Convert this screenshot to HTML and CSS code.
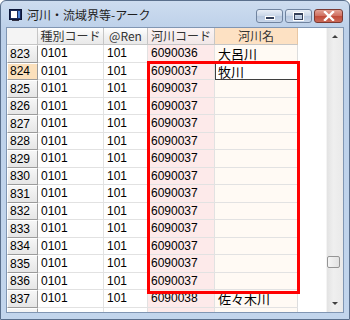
FILE: index.html
```html
<!DOCTYPE html>
<html lang="ja">
<head>
<meta charset="utf-8">
<link rel="stylesheet" href="styles.css">
</head>
<body>
<div class="window">
  <div class="titlebar">
    <svg class="appicon" width="13" height="12" viewBox="0 0 13 12">
      <rect x="0.5" y="0.5" width="12" height="10" fill="#1a2a5a" stroke="#0c1638"/>
      <rect x="2" y="2" width="6" height="7" fill="#ffffff"/>
      <rect x="9" y="2" width="2" height="7" fill="#4f86d9"/>
      <rect x="3" y="11" width="7" height="1" fill="#334"/>
    </svg>
    <span class="title">河川・流域界等-アーク</span>
    <div class="caption-btns">
      <div class="cbtn"><span class="min-glyph"></span></div>
      <div class="cbtn"><span class="max-glyph"></span></div>
      <div class="cbtn close">
        <svg width="12" height="10" viewBox="0 0 12 10"><path d="M2 1 L10 9 M10 1 L2 9" stroke="#ffffff" stroke-width="2.4" stroke-linecap="square"/></svg>
      </div>
    </div>
  </div>
  <div class="client">
    <div class="sheet">
      <div class="grid">
        <div class="hc corner"></div>
        <div class="hc">種別コード</div>
        <div class="hc">@Ren</div>
        <div class="hc code">河川コード</div>
        <div class="hc cur">河川名</div>

        <div class="rh">823</div><div class="c">0101</div><div class="c">101</div><div class="c code">6090036</div><div class="c name">大呂川</div>
        <div class="rh cur">824</div><div class="c">0101</div><div class="c">101</div><div class="c code">6090037</div><div class="c name edit">牧川</div>
        <div class="rh">825</div><div class="c">0101</div><div class="c">101</div><div class="c code">6090037</div><div class="c name"></div>
        <div class="rh">826</div><div class="c">0101</div><div class="c">101</div><div class="c code">6090037</div><div class="c name"></div>
        <div class="rh">827</div><div class="c">0101</div><div class="c">101</div><div class="c code">6090037</div><div class="c name"></div>
        <div class="rh">828</div><div class="c">0101</div><div class="c">101</div><div class="c code">6090037</div><div class="c name"></div>
        <div class="rh">829</div><div class="c">0101</div><div class="c">101</div><div class="c code">6090037</div><div class="c name"></div>
        <div class="rh">830</div><div class="c">0101</div><div class="c">101</div><div class="c code">6090037</div><div class="c name"></div>
        <div class="rh">831</div><div class="c">0101</div><div class="c">101</div><div class="c code">6090037</div><div class="c name"></div>
        <div class="rh">832</div><div class="c">0101</div><div class="c">101</div><div class="c code">6090037</div><div class="c name"></div>
        <div class="rh">833</div><div class="c">0101</div><div class="c">101</div><div class="c code">6090037</div><div class="c name"></div>
        <div class="rh">834</div><div class="c">0101</div><div class="c">101</div><div class="c code">6090037</div><div class="c name"></div>
        <div class="rh">835</div><div class="c">0101</div><div class="c">101</div><div class="c code">6090037</div><div class="c name"></div>
        <div class="rh">836</div><div class="c">0101</div><div class="c">101</div><div class="c code">6090037</div><div class="c name"></div>
        <div class="rh">837</div><div class="c">0101</div><div class="c">101</div><div class="c code">6090038</div><div class="c name">佐々木川</div>
        <div class="rh part"></div><div class="c part"></div><div class="c part"></div><div class="c code part"></div><div class="c name part"></div>
      </div>
      <div class="highlight"></div>
    </div>
    <div class="vscroll">
      <div class="arrow up"></div>
      <div class="track"><div class="thumb"></div></div>
      <div class="arrow down"></div>
    </div>
  </div>
</div>
</body>
</html>
```
FILE: styles.css
```css
html, body {
  margin: 0;
  padding: 0;
  background: #ffffff;
}
body {
  width: 350px;
  height: 320px;
  overflow: hidden;
  font-family: "Liberation Sans", "Noto Sans CJK JP", sans-serif;
}
.window {
  box-sizing: border-box;
  width: 350px;
  height: 320px;
  border: 1px solid #5a6f8c;
  border-radius: 6px 6px 0 0;
  background: linear-gradient(#cddcef, #bcd0e9 30px, #c2d5ec);
  display: flex;
  flex-direction: column;
  padding: 0 5px 6px 5px;
}
.titlebar {
  height: 26px;
  display: flex;
  align-items: center;
  flex: none;
}
.appicon {
  margin-left: 3px;
  margin-top: 1px;
}
.title {
  margin-left: 5px;
  font-family: "Noto Sans CJK JP", sans-serif;
  font-size: 12px;
  color: #1e1e1e;
  margin-top: 1px;
}
.caption-btns {
  margin-left: auto;
  display: flex;
  gap: 2px;
  align-self: flex-start;
  margin-top: 8px;
  margin-right: 1px;
}
.cbtn {
  width: 25px;
  height: 12px;
  border: 1px solid #6f839f;
  border-radius: 3px;
  background: linear-gradient(#e8eef7, #c9d6e8 50%, #b7c8df 51%, #c8d6ea);
  display: flex;
  align-items: center;
  justify-content: center;
}
.cbtn.close {
  width: 27px;
  border-color: #7a3a33;
  background: linear-gradient(#e3a194, #cf6e5f 50%, #c04a39 51%, #cb6a58);
}
.min-glyph {
  width: 8px;
  height: 2px;
  background: #34405a;
  margin-top: 4px;
  border: 1px solid #ffffff;
}
.max-glyph {
  width: 7px;
  height: 4px;
  border: 1px solid #34405a;
  border-top-width: 2px;
  box-shadow: 0 0 0 1px #ffffff;
}
.client {
  flex: 1;
  display: flex;
  border: 1px solid #8096b3;
  background: #ffffff;
  min-height: 0;
}
.sheet {
  flex: 1;
  position: relative;
  background: #ffffff;
  overflow: hidden;
}
.grid {
  display: grid;
  grid-template-columns: 31px 66px 44px 67px 83px;
  grid-template-rows: 17px;
  grid-auto-rows: 17.5px;
  font-size: 12px;
  color: #000000;
}
.hc {
  box-sizing: border-box;
  border-right: 1px solid #c6c6c6;
  border-bottom: 1px solid #c6c6c6;
  background: linear-gradient(#ffffff, #f1f1f1 50%, #e9e9e9);
  display: flex;
  align-items: center;
  justify-content: center;
  font-family: "Noto Sans CJK JP", sans-serif;
  font-size: 12px;
  color: #333333;
  line-height: 1;
}
.hc.corner {
  background: #f4f4f4;
}
.hc.code {
  background: linear-gradient(#fbf4f4, #f1e7e7);
}
.hc.cur {
  background: #fde1c3;
  border-right-color: #e8c7a4;
}
.rh {
  box-sizing: border-box;
  border-top: 1px solid #ffffff;
  border-left: 1px solid #ffffff;
  border-right: 1px solid #9c9c9c;
  border-bottom: 1px solid #9c9c9c;
  background: linear-gradient(#f6f6f6, #e6e6e6);
  display: flex;
  align-items: center;
  padding-left: 2px;
  line-height: 1;
}
.rh.cur {
  background: #fbe0bc;
}
.c {
  box-sizing: border-box;
  border-right: 1px solid #e2e2e2;
  border-bottom: 1px solid #e2e2e2;
  display: flex;
  align-items: center;
  padding-left: 3px;
  line-height: 1;
  white-space: nowrap;
}
.c.code {
  background: #fdeaea;
  padding-left: 3px;
}
.c.name {
  background: #fffaf4;
  font-family: "Noto Sans CJK JP", sans-serif;
  font-size: 13px;
  border-right-color: #dddddd;
}
.c.edit {
  background: #ffffff;
  border: 1px solid #3f3f3f;
  padding-left: 2px;
}
.rh.part, .c.part {
  border-bottom: none;
}
.highlight {
  position: absolute;
  left: 140px;
  top: 33px;
  width: 153px;
  height: 233px;
  box-sizing: border-box;
  border: 3px solid #ff0000;
  pointer-events: none;
}
.vscroll {
  width: 16px;
  flex: none;
  display: flex;
  flex-direction: column;
  background: linear-gradient(90deg, #e3e3e3, #efefef 40%, #e9e9e9);
  border-left: 1px solid #f4f4f4;
}
.arrow {
  height: 17px;
  flex: none;
  display: flex;
  align-items: center;
  justify-content: center;
}
.arrow::after {
  content: "";
  width: 0;
  height: 0;
  border-left: 3px solid transparent;
  border-right: 3px solid transparent;
}
.arrow.up::after {
  border-bottom: 3px solid #404040;
}
.arrow.down::after {
  border-top: 3px solid #404040;
}
.track {
  flex: 1;
}
.thumb {
  margin-top: 211px;
  margin-left: 0;
  width: 13px;
  height: 12px;
  box-sizing: border-box;
  border: 1px solid #959595;
  border-radius: 2px;
  background: linear-gradient(90deg, #f5f5f5, #e2e2e2);
}
```
